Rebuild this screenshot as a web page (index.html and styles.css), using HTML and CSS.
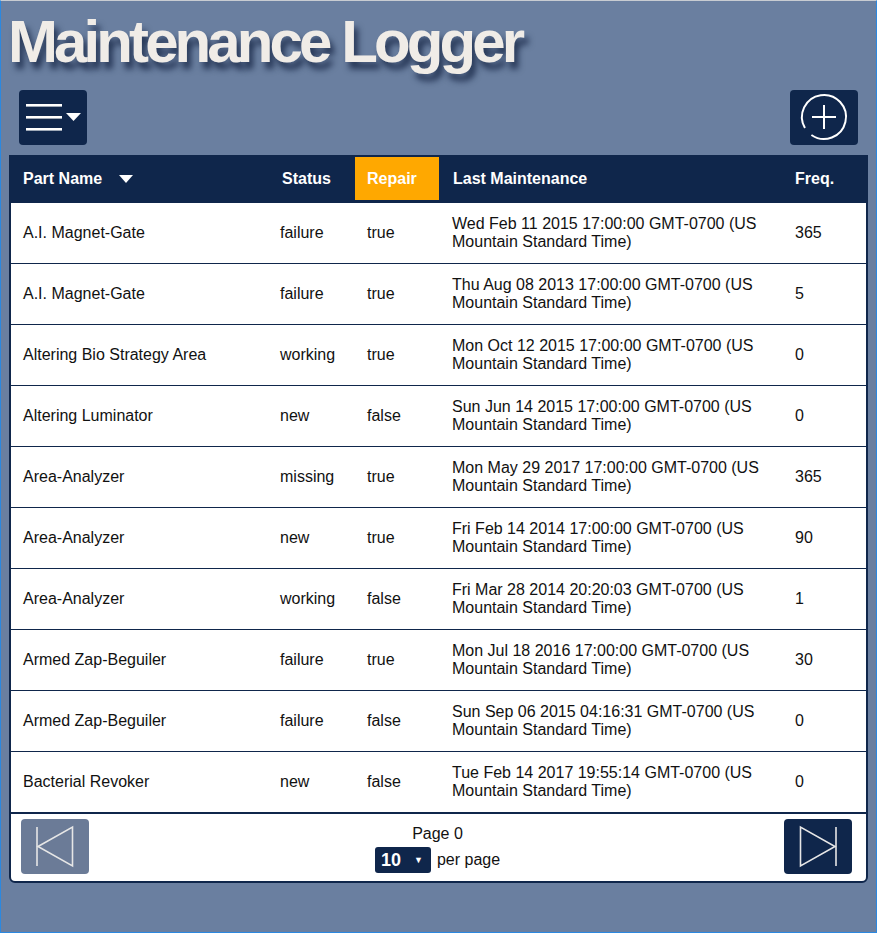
FILE: index.html
```html
<!DOCTYPE html>
<html>
<head>
<meta charset="utf-8">
<title>Maintenance Logger</title>
<link rel="stylesheet" href="styles.css">
</head>
<body>
<div class="frame">
  <h1 class="title">Maintenance Logger</h1>
  <div class="toolbar">
    <button class="tool-btn" aria-label="Menu">
      <svg width="68" height="55" viewBox="0 0 68 55">
        <rect x="7" y="14" width="36" height="2.6" fill="#fff"/>
        <rect x="7" y="26" width="36" height="2.6" fill="#fff"/>
        <rect x="7" y="38" width="36" height="2.6" fill="#fff"/>
        <polygon points="47,23 62,23 54.5,31" fill="#fff"/>
      </svg>
    </button>
    <button class="tool-btn" aria-label="Add">
      <svg width="68" height="55" viewBox="0 0 68 55">
        <path d="M14.95 38 A22 22 0 1 1 21.4 45" fill="none" stroke="#fff" stroke-width="2"/>
        <line x1="34" y1="15" x2="34" y2="39" stroke="#fff" stroke-width="2"/>
        <line x1="22" y1="27" x2="46" y2="27" stroke="#fff" stroke-width="2"/>
      </svg>
    </button>
  </div>

  <div class="card">
    <div class="grid head">
      <div class="th">Part Name <span class="sort"></span></div>
      <div class="th th-status">Status</div>
      <div class="th active">Repair</div>
      <div class="th th-date">Last Maintenance</div>
      <div class="th">Freq.</div>
    </div>
    <div class="grid row"><div class="td">A.I. Magnet-Gate</div><div class="td">failure</div><div class="td">true</div><div class="td date">Wed Feb 11 2015 17:00:00 GMT-0700 (US Mountain Standard Time)</div><div class="td">365</div></div>
    <div class="grid row"><div class="td">A.I. Magnet-Gate</div><div class="td">failure</div><div class="td">true</div><div class="td date">Thu Aug 08 2013 17:00:00 GMT-0700 (US Mountain Standard Time)</div><div class="td">5</div></div>
    <div class="grid row"><div class="td">Altering Bio Strategy Area</div><div class="td">working</div><div class="td">true</div><div class="td date">Mon Oct 12 2015 17:00:00 GMT-0700 (US Mountain Standard Time)</div><div class="td">0</div></div>
    <div class="grid row"><div class="td">Altering Luminator</div><div class="td">new</div><div class="td">false</div><div class="td date">Sun Jun 14 2015 17:00:00 GMT-0700 (US Mountain Standard Time)</div><div class="td">0</div></div>
    <div class="grid row"><div class="td">Area-Analyzer</div><div class="td">missing</div><div class="td">true</div><div class="td date">Mon May 29 2017 17:00:00 GMT-0700 (US Mountain Standard Time)</div><div class="td">365</div></div>
    <div class="grid row"><div class="td">Area-Analyzer</div><div class="td">new</div><div class="td">true</div><div class="td date">Fri Feb 14 2014 17:00:00 GMT-0700 (US Mountain Standard Time)</div><div class="td">90</div></div>
    <div class="grid row"><div class="td">Area-Analyzer</div><div class="td">working</div><div class="td">false</div><div class="td date">Fri Mar 28 2014 20:20:03 GMT-0700 (US Mountain Standard Time)</div><div class="td">1</div></div>
    <div class="grid row"><div class="td">Armed Zap-Beguiler</div><div class="td">failure</div><div class="td">true</div><div class="td date">Mon Jul 18 2016 17:00:00 GMT-0700 (US Mountain Standard Time)</div><div class="td">30</div></div>
    <div class="grid row"><div class="td">Armed Zap-Beguiler</div><div class="td">failure</div><div class="td">false</div><div class="td date">Sun Sep 06 2015 04:16:31 GMT-0700 (US Mountain Standard Time)</div><div class="td">0</div></div>
    <div class="grid row last"><div class="td">Bacterial Revoker</div><div class="td">new</div><div class="td">false</div><div class="td date">Tue Feb 14 2017 19:55:14 GMT-0700 (US Mountain Standard Time)</div><div class="td">0</div></div>

    <div class="pager">
      <button class="page-btn disabled" aria-label="First page">
        <svg width="68" height="55" viewBox="0 0 68 55">
          <line x1="16" y1="8" x2="16" y2="47" stroke="#e6e6e6" stroke-width="1.6"/>
          <polygon points="17,27.5 51.5,8 51.5,47" fill="none" stroke="#e6e6e6" stroke-width="1.6"/>
        </svg>
      </button>
      <div class="page-info">
        <div class="page-num">Page 0</div>
        <div class="per-page"><span class="size-select">10<span class="caret">&#9660;</span></span> per page</div>
      </div>
      <button class="page-btn" aria-label="Last page">
        <svg width="68" height="55" viewBox="0 0 68 55">
          <polygon points="16.5,8 16.5,47 51,27.5" fill="none" stroke="#e6e6e6" stroke-width="1.6"/>
          <line x1="52" y1="8" x2="52" y2="47" stroke="#e6e6e6" stroke-width="1.6"/>
        </svg>
      </button>
    </div>
  </div>
</div>
</body>
</html>
```

FILE: styles.css
```css
html, body {
  margin: 0;
  padding: 0;
  background: #6a7fa0;
}

.frame {
  box-sizing: border-box;
  min-height: 933px;
  border-top: 1px solid #c8ccd2;
  border-left: 1px solid #2b88e0;
  border-right: 1px solid #2b88e0;
  border-bottom: 1px solid #2b88e0;
  font-family: "Liberation Sans", Arial, sans-serif;
}

.title {
  margin: 11px 0 0 7px;
  font-size: 60px;
  line-height: 60px;
  font-weight: bold;
  letter-spacing: -3.9px;
  color: #f0ece7;
  text-shadow: 4px 7px 6px rgba(15, 30, 60, 0.75);
}

.toolbar {
  display: flex;
  justify-content: space-between;
  padding: 0 18px;
  margin-top: 18px;
}

.tool-btn, .page-btn {
  width: 68px;
  height: 55px;
  padding: 0;
  border: none;
  border-radius: 4px;
  background: #0f264b;
  display: block;
}

.tool-btn svg, .page-btn svg {
  display: block;
}

.card {
  margin: 10px 0 0 8px;
  width: 859px;
  box-sizing: border-box;
  border: 2px solid #0f264b;
  border-radius: 0 0 6px 6px;
  background: #fff;
  overflow: hidden;
}

.grid {
  display: grid;
  grid-template-columns: 257px 87px 84px 344px 83px;
}

.head {
  background: #0f264b;
  padding-bottom: 3px;
}

.th {
  height: 43px;
  display: flex;
  align-items: center;
  padding-left: 12px;
  color: #fff;
  font-weight: bold;
  font-size: 16px;
}

.th-status {
  padding-left: 14px;
}

.th-date {
  padding-left: 14px;
}

.th.active {
  background: #ffa800;
}

.sort {
  display: inline-block;
  width: 0;
  height: 0;
  margin-left: 17px;
  border-left: 7px solid transparent;
  border-right: 7px solid transparent;
  border-top: 8px solid #fff;
}

.row {
  height: 61px;
  box-sizing: border-box;
  border-bottom: 1px solid #0f264b;
}

.row.last {
  height: 62px;
  border-bottom-width: 2px;
}

.td {
  display: flex;
  align-items: center;
  padding-left: 12px;
  padding-right: 6px;
  font-size: 16px;
  line-height: 18px;
  color: #111;
}

.td.date {
  padding-left: 13px;
}

.pager {
  display: flex;
  justify-content: space-between;
  align-items: flex-start;
  padding: 5px 14px 7px 10px;
}

.page-btn.disabled {
  background: #6b7b97;
}

.page-info {
  display: flex;
  flex-direction: column;
  align-items: center;
  color: #111;
  font-size: 16px;
  padding-top: 6px;
  padding-left: 2px;
}

.page-num {
  line-height: 18px;
}

.per-page {
  margin-top: 4px;
  display: flex;
  align-items: center;
  gap: 6px;
  line-height: 18px;
}

.size-select {
  display: inline-flex;
  align-items: center;
  justify-content: space-between;
  box-sizing: border-box;
  width: 56px;
  height: 26px;
  padding: 0 8px 0 6px;
  border-radius: 3px;
  background: #0f264b;
  color: #fff;
  font-weight: bold;
  font-size: 18px;
}

.caret {
  font-size: 9px;
  font-weight: normal;
}
```
